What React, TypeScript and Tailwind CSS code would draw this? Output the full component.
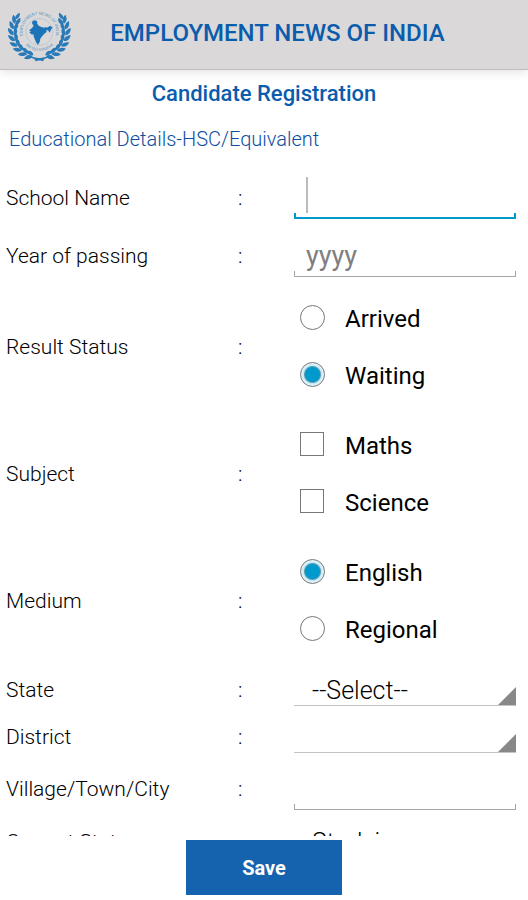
import { useState, type ReactNode } from "react";

// stem points of one laurel branch, bottom to top, with the growing direction in degrees
const leaves = [
  { x: 99, y: 166, angle: 192 },
  { x: 82, y: 160, angle: 206 },
  { x: 66, y: 150, angle: 220 },
  { x: 54, y: 137, angle: 234 },
  { x: 46, y: 121, angle: 248 },
  { x: 41, y: 104, angle: 262 },
  { x: 41, y: 86, angle: 276 },
  { x: 45, y: 69, angle: 290 },
];

const inputClass =
  "block h-[42px] w-full bg-transparent px-3 text-[27px] font-normal text-black outline-none placeholder:text-[#7f7f7f] placeholder:opacity-100";

function Branch() {
  return (
    <g fill="#2a7ab8">
      {leaves.map((leaf) => (
        <g key={leaf.angle} transform={`translate(${leaf.x} ${leaf.y}) rotate(${leaf.angle})`}>
          <path d="M0 0 C3 -11 13 -15 24 -13 C20 -3 10 4 0 0Z" />
          <path d="M-2 3 C5 -1 17 2 22 10 C13 16 3 14 -2 3Z" />
        </g>
      ))}
      <path d="M47 56 C45 47 51 40 60 36 C62 46 57 54 47 56Z" />
      <path d="M74 158 C90 169 108 170 134 176 L130 182 C108 176 90 174 74 158Z" />
    </g>
  );
}

function Logo() {
  return (
    <svg viewBox="22 28 192 156" className="h-13 w-16 shrink-0" aria-hidden="true">
      <Branch />
      <g transform="translate(238 0) scale(-1 1)">
        <Branch />
      </g>
      <circle cx="119" cy="94" r="58" fill="#dad8d9" />
      <circle cx="119" cy="94" r="40" fill="none" stroke="#8fb4d3" strokeWidth="2" strokeDasharray="4 2" />
      <path id="ring-top" d="M75 118 A50 50 0 1 1 163 118" fill="none" transform="translate(0 -2)" />
      <path id="ring-bottom" d="M65 110 A56 56 0 0 0 173 110" fill="none" />
      <g fill="#5f98c6" fontSize="13" fontWeight="400">
        <text>
          <textPath href="#ring-top" startOffset="50%" textAnchor="middle">
            EMPLOYMENT NEWS OF INDIA
          </textPath>
        </text>
        <text>
          <textPath href="#ring-bottom" startOffset="50%" textAnchor="middle">
            AN ISO Initiative
          </textPath>
        </text>
      </g>
      <path
        fill="#1b74b8"
        d="M97 63 L104 59 L113 62 L112 68 L117 75 L125 79 L134 81 L138 79 L142 81 L150 76 L159 80 L154 87 L150 96 L145 89 L140 88 L141 94 L134 99 L126 108 L122 114 L120 124 L115 133 L109 125 L103 110 L101 100 L97 102 L89 95 L94 92 L88 89 L97 82 L102 75 L98 70Z"
      />
    </svg>
  );
}

function Row({ label, htmlFor, className, children }: { label: string; htmlFor?: string; className: string; children: ReactNode }) {
  return (
    <div className={`grid grid-cols-[232fr_56fr_222fr] items-center ${className}`}>
      {htmlFor ? <label htmlFor={htmlFor} className="pt-0.5">{label}</label> : <span id={label.replace(" ", "-")} className="pt-0.5">{label}</span>}
      <span className="pt-0.5">:</span>
      {children}
    </div>
  );
}

function Group({ label, children }: { label: string; children: ReactNode }) {
  return (
    <Row label={label} className="h-[127px] pb-[3px]">
      <div role="group" aria-labelledby={label.replace(" ", "-")} className="flex flex-col gap-px pb-[3px]">
        {children}
      </div>
    </Row>
  );
}

function Radio({ name, label, checked, onChange }: { name: string; label: string; checked: boolean; onChange: () => void }) {
  return (
    <label className="flex h-14 items-center gap-5 pl-1.5 text-2xl font-normal text-black">
      <input
        type="radio"
        name={name}
        checked={checked}
        onChange={onChange}
        className="size-[25px] shrink-0 appearance-none rounded-full border border-[#777] checked:bg-[radial-gradient(circle,#0099cc_0_7px,#5f9fb8_8px,#c4e9f5_9px,#f2fbfe_12px)]"
      />
      <span className="pt-1">{label}</span>
    </label>
  );
}

function Checkbox({ label }: { label: string }) {
  return (
    <label className="flex h-14 items-center gap-5 pl-1.5 text-2xl font-normal text-black">
      <input
        type="checkbox"
        className="mr-px size-6 shrink-0 appearance-none border border-[#777] checked:bg-[#0099cc]"
      />
      <span className="pt-1">{label}</span>
    </label>
  );
}

function Select({ id, options }: { id: string; options: string[] }) {
  return (
    <div className="relative border-b border-[#c4c4c4]">
      <select id={id} className="block h-8 w-full appearance-none bg-transparent pt-0.5 pl-4.5 text-[25px] leading-8 text-black outline-none">
        {options.map((option) => (
          <option key={option}>{option}</option>
        ))}
      </select>
      <span className="pointer-events-none absolute right-0 bottom-0 size-[18px] bg-[#888] [clip-path:polygon(100%_0,100%_100%,0_100%)]" />
    </div>
  );
}

export default function App() {
  const [status, setStatus] = useState("Waiting");
  const [medium, setMedium] = useState("English");

  return (
    <form className="flex h-screen flex-col bg-white font-['Roboto',sans-serif] text-black">
      <header className="flex h-[70px] shrink-0 items-start border-b border-[#c0bebf] bg-[#dad8d9] pt-2.5 pr-2 pl-[7px] shadow-[0_2px_10px_rgba(0,0,0,0.12)]">
        <Logo />
        <h1 className="flex-1 pt-[7px] pr-9 text-center text-2xl leading-8 font-medium text-[#0a5cad]">EMPLOYMENT NEWS OF INDIA</h1>
      </header>

      <main className="flex-1 overflow-y-auto pr-3 pl-1.5 text-[21px] font-light [scrollbar-width:none]">
        <h2 className="pt-2 pl-1.5 text-center text-[22px] leading-8 font-medium text-[#0a5cad]">Candidate Registration</h2>
        <h3 className="h-[59px] pt-[15px] pl-[3px] text-xl text-[#0d4ea2]">Educational Details-HSC/Equivalent</h3>

        <Row label="School Name" htmlFor="school" className="h-[58px]">
          <div className="relative after:pointer-events-none after:absolute after:inset-x-0 after:bottom-0 after:h-1.5 after:border-x-2 after:border-b-2 after:border-[#0099cc]">
            <input id="school" className={inputClass} />
            <span className="absolute top-0 left-3 h-9 w-0.5 bg-[#bbb]" />
          </div>
        </Row>
        <Row label="Year of passing" htmlFor="year" className="h-[58px]">
          <div className="relative after:pointer-events-none after:absolute after:inset-x-0 after:bottom-0 after:h-1.5 after:border after:border-t-0 after:border-[#a6a6a6]">
            <input id="year" placeholder="yyyy" className={inputClass} />
          </div>
        </Row>

        <Group label="Result Status">
          {["Arrived", "Waiting"].map((item) => (
            <Radio key={item} name="status" label={item} checked={status === item} onChange={() => setStatus(item)} />
          ))}
        </Group>
        <Group label="Subject">
          <Checkbox label="Maths" />
          <Checkbox label="Science" />
        </Group>
        <Group label="Medium">
          {["English", "Regional"].map((item) => (
            <Radio key={item} name="medium" label={item} checked={medium === item} onChange={() => setMedium(item)} />
          ))}
        </Group>

        <Row label="State" htmlFor="state" className="h-[47px]">
          <Select id="state" options={["--Select--"]} />
        </Row>
        <Row label="District" htmlFor="district" className="h-[47px]">
          <Select id="district" options={[""]} />
        </Row>
        <Row label="Village/Town/City" htmlFor="city" className="h-[58px]">
          <div className="relative after:pointer-events-none after:absolute after:inset-x-0 after:bottom-0 after:h-1.5 after:border after:border-t-0 after:border-[#a6a6a6]">
            <input id="city" className={inputClass} />
          </div>
        </Row>
        <Row label="Current Status" htmlFor="current" className="h-[47px]">
          <Select id="current" options={["Studying"]} />
        </Row>
      </main>

      <footer className="flex shrink-0 justify-center pt-1 pb-[5px]">
        <button type="button" className="h-[55px] w-[156px] bg-[#1562ae] text-xl font-bold text-white">
          Save
        </button>
      </footer>
    </form>
  );
}
